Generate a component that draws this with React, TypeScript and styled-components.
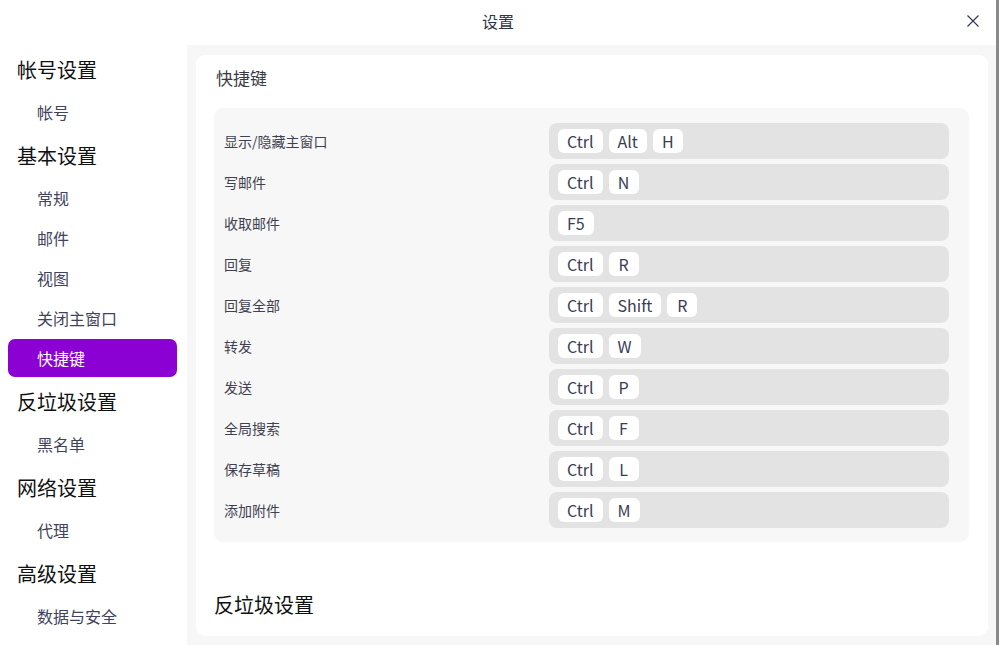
import React from "react";
import styled, { createGlobalStyle } from "styled-components";

const Global = createGlobalStyle`
  html, body { margin: 0; padding: 0; background: #fff; }
  body { font-family: "Noto Sans CJK SC", "Noto Sans", sans-serif; overflow: hidden; }
  * { box-sizing: border-box; }
`;

const Window = styled.div`
  width: 999px;
  height: 645px;
  display: flex;
  flex-direction: column;
  background: #fff;
  border-right: 3px solid #8a8a8a;
  overflow: hidden;
`;

const TitleBar = styled.div`
  height: 45px;
  flex: none;
  display: flex;
  align-items: center;
  justify-content: center;
  padding-bottom: 4px;
  position: relative;
  font-size: 16px;
  color: #2f3444;
`;

const CloseBtn = styled.button`
  position: absolute;
  right: 15px;
  top: 13px;
  width: 16px;
  height: 16px;
  padding: 0;
  border: none;
  background: transparent;
  display: flex;
  align-items: center;
  justify-content: center;
`;

const Body = styled.div`
  flex: 1;
  display: flex;
  min-height: 0;
`;

const Sidebar = styled.nav`
  width: 187px;
  flex: none;
  padding: 1px 10px 0 8px;
  display: flex;
  flex-direction: column;
`;

const GroupHeader = styled.div`
  height: 46px;
  display: flex;
  align-items: center;
  padding-left: 9px;
  font-size: 20px;
  color: #111;
`;

const NavItem = styled.div<{ $active?: boolean }>`
  height: 38px;
  margin: 1px 0;
  display: flex;
  align-items: center;
  padding-left: 29px;
  font-size: 16px;
  border-radius: 7px;
  color: ${(p) => (p.$active ? "#fff" : "#41435a")};
  background: ${(p) => (p.$active ? "#8b00d2" : "transparent")};
`;

const Content = styled.main`
  flex: 1;
  background: #f7f7f7;
  padding: 10px 8px 9px 9px;
  display: flex;
`;

const Card = styled.section`
  flex: 1;
  background: #fff;
  border-radius: 9px;
  padding: 9px 19px 0 18px;
  display: flex;
  flex-direction: column;
`;

const CardTitle = styled.h2`
  margin: 0;
  height: 27px;
  display: flex;
  align-items: center;
  padding-left: 2px;
  font-size: 17px;
  font-weight: normal;
  color: #3a3a44;
`;

const Panel = styled.div`
  margin-top: 17px;
  background: #f7f7f7;
  border-radius: 9px;
  padding: 15px 20px 14px 10px;
  display: flex;
  flex-direction: column;
  gap: 5px;
`;

const Row = styled.div`
  display: flex;
  align-items: center;
  height: 36px;
`;

const Label = styled.div`
  width: 325px;
  flex: none;
  font-size: 14px;
  color: #3f4150;
`;

const KeyBar = styled.div`
  flex: 1;
  height: 36px;
  background: #e3e3e3;
  border-radius: 8px;
  display: flex;
  align-items: center;
  gap: 6px;
  padding-left: 9px;
`;

const Key = styled.span`
  height: 24px;
  padding: 0 9px;
  min-width: 30px;
  background: #fff;
  border-radius: 6px;
  display: flex;
  align-items: center;
  justify-content: center;
  font-size: 16px;
  color: #3a3c55;
`;

const SectionTitle = styled.h2`
  margin: 49px 0 0 0;
  font-size: 20px;
  font-weight: normal;
  color: #111;
  line-height: 28px;
`;

const nav: { title: string; items: string[] }[] = [
  { title: "帐号设置", items: ["帐号"] },
  { title: "基本设置", items: ["常规", "邮件", "视图", "关闭主窗口", "快捷键"] },
  { title: "反垃圾设置", items: ["黑名单"] },
  { title: "网络设置", items: ["代理"] },
  { title: "高级设置", items: ["数据与安全"] },
];

const shortcuts: [string, string[]][] = [
  ["显示/隐藏主窗口", ["Ctrl", "Alt", "H"]],
  ["写邮件", ["Ctrl", "N"]],
  ["收取邮件", ["F5"]],
  ["回复", ["Ctrl", "R"]],
  ["回复全部", ["Ctrl", "Shift", "R"]],
  ["转发", ["Ctrl", "W"]],
  ["发送", ["Ctrl", "P"]],
  ["全局搜索", ["Ctrl", "F"]],
  ["保存草稿", ["Ctrl", "L"]],
  ["添加附件", ["Ctrl", "M"]],
];

export default function App() {
  return (
    <>
      <Global />
      <Window>
        <TitleBar>
          设置
          <CloseBtn aria-label="关闭">
            <svg width="12" height="12" viewBox="0 0 12 12">
              <path d="M0.5 0.5 L11.5 11.5 M11.5 0.5 L0.5 11.5" stroke="#2f3450" strokeWidth="1.1" fill="none" />
            </svg>
          </CloseBtn>
        </TitleBar>
        <Body>
          <Sidebar>
            {nav.map((g) => (
              <React.Fragment key={g.title}>
                <GroupHeader>{g.title}</GroupHeader>
                {g.items.map((it) => (
                  <NavItem key={it} $active={it === "快捷键"}>
                    {it}
                  </NavItem>
                ))}
              </React.Fragment>
            ))}
          </Sidebar>
          <Content>
            <Card>
              <CardTitle>快捷键</CardTitle>
              <Panel>
                {shortcuts.map(([label, keys]) => (
                  <Row key={label}>
                    <Label>{label}</Label>
                    <KeyBar>
                      {keys.map((k) => (
                        <Key key={k}>{k}</Key>
                      ))}
                    </KeyBar>
                  </Row>
                ))}
              </Panel>
              <SectionTitle>反垃圾设置</SectionTitle>
            </Card>
          </Content>
        </Body>
      </Window>
    </>
  );
}
